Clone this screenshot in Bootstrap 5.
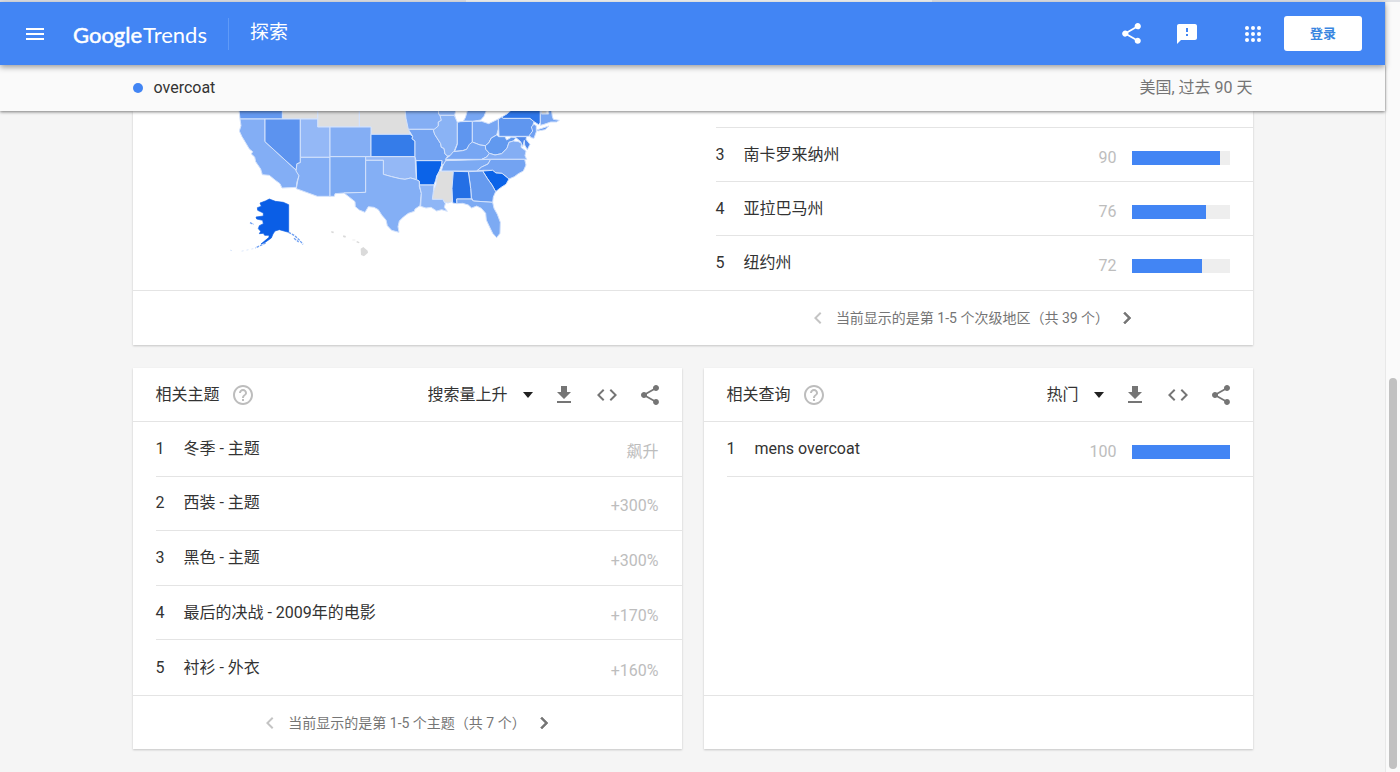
<!DOCTYPE html>
<html lang="zh-CN">
<head>
<meta charset="utf-8">
<meta name="viewport" content="width=device-width, initial-scale=1">
<title>overcoat - 探索 - Google Trends</title>
<link rel="stylesheet" href="https://cdn.jsdelivr.net/npm/bootstrap@5.3.0/dist/css/bootstrap.min.css">
<style>
  body { font-family: Roboto, "Noto Sans CJK SC", sans-serif; font-size: 16px; line-height: 24px; color: #333; background: #f5f5f5; }
  .tab-strip { height: 2px; background: #dfe1e6; }
  .tab-strip .current { width: 33.3%; margin-left: 33.3%; background: #f1f3f4; }
  .page-width { width: 100%; max-width: 1120px; margin: 0 auto; }
  .topbar { height: 63px; background: #4285f4; color: #fff; box-shadow: 0 2px 6px rgba(0,0,0,.4); padding: 0 23px 0 15px; z-index: 3; }
  .icon-btn { border: 0; background: none; padding: 0; width: 40px; height: 40px; color: inherit; display: inline-flex; align-items: center; justify-content: center; }
  .icon-btn svg, .pager svg { fill: currentColor; display: block; }
  .brand { font-family: Lato, sans-serif; font-size: 22px; line-height: 30px; color: #fff; text-decoration: none; margin: 2px 0 0 18px; }
  .brand-strong { -webkit-text-stroke: .5px #fff; margin-right: 1px; }
  .rule-v { width: 1px; height: 32px; background: #5f9af8; margin: 0 21px; }
  .section-name { font-size: 19px; font-weight: 400; margin: 0; }
  .feedback { margin: 0 26px 0 16px; }
  .login { width: 78px; height: 35px; border: 0; border-radius: 3px; background: #fff; color: #3a86e0; font-size: 13px; font-weight: 700; margin-left: 11px; padding: 0; }
  .termbar { height: 46px; background: #fafafa; box-shadow: 0 1px 3px rgba(0,0,0,.5); z-index: 2; }
  .dot { width: 10px; height: 10px; border-radius: 50%; background: #4285f4; margin-right: 11px; }
  .muted { color: #757575; }
  .panel { background: #fff; box-shadow: 0 1px 2px rgba(0,0,0,.2); }
  .panel-head { height: 54px; border-bottom: 1px solid #e4e4e4; padding: 0 10px 0 23px; }
  .panel-head h2 { font-size: 16px; line-height: 24px; font-weight: 400; margin: 0; }
  .panel-head .icon-btn { width: 43px; color: #757575; }
  .panel-head .help { width: 20px; margin-left: 13px; color: #bdbdbd; }
  .sorter { appearance: none; border: 0; color: #333; font-size: 16px; line-height: 24px; padding: 0 34px 0 0; background: url("data:image/svg+xml,%3Csvg xmlns='http://www.w3.org/2000/svg' width='10' height='6'%3E%3Cpath d='M0 0h10L5 6z' fill='%23212121'/%3E%3C/svg%3E") no-repeat right 10px center; }
  .rank-list { list-style: none; margin: 0 0 0 23px; padding: 0; display: grid; }
  .rank-list.five { height: 273px; grid-template-rows: repeat(5, 1fr); }
  .rank-list.three { height: 162px; grid-template-rows: repeat(3, 1fr); }
  .rank-list li { display: flex; align-items: center; padding-right: 23px; border-bottom: 1px solid #e4e4e4; }
  .rank-list li:nth-child(3):last-child, .rank-list li:nth-child(5) { border-bottom: 0; }
  .rank-no { width: 28px; }
  .metric { margin-left: auto; display: flex; align-items: center; padding-top: 6px; color: #bdbdbd; }
  .meter { width: 98px; height: 14px; background: #eee; margin-left: 15px; }
  .meter-fill { height: 100%; background: #4285f4; }
  .row-end { height: 17px; margin-left: 23px; border-bottom: 1px solid #e4e4e4; }
  .panel-foot { height: 55px; border-top: 1px solid #e4e4e4; }
  .panel-pair .panel-foot { height: 54px; }
  .pager { font-size: 14px; color: #757575; height: 100%; display: flex; align-items: center; justify-content: center; }
  .pager .icon-btn { width: 24px; height: 24px; margin: 0 6px; }
  .pager .icon-btn:disabled { color: #c4c4c4; }
  .map-svg { display: block; margin-left: 87px; width: 350px; height: 159px; }
  .map-svg .land { stroke: #d3e2fc; stroke-width: 3; stroke-linejoin: round; }
  .panel-pair { gap: 22px; margin-top: 23px; }
  .scroll-track { width: 15px; background: #fafafa; border-left: 1px solid #e8e8e8; display: flex; flex-direction: column; justify-content: flex-end; padding: 0 3px 3px; }
  .scroll-thumb { height: 51%; border-radius: 4px; background: #c1c1c1; }
</style>
</head>
<body>
<svg class="d-none" aria-hidden="true">
  <symbol id="i-share" viewBox="0 0 24 24"><path d="M18 16.08c-.76 0-1.44.3-1.96.77L8.91 12.7c.05-.23.09-.46.09-.7s-.04-.47-.09-.7l7.05-4.11c.54.5 1.25.81 2.04.81 1.66 0 3-1.34 3-3s-1.34-3-3-3-3 1.34-3 3c0 .24.04.47.09.7L8.04 9.81C7.5 9.31 6.79 9 6 9c-1.66 0-3 1.34-3 3s1.34 3 3 3c.79 0 1.5-.31 2.04-.81l7.12 4.16c-.05.21-.08.43-.08.65 0 1.61 1.31 2.92 2.92 2.92s2.92-1.31 2.92-2.92-1.31-2.92-2.92-2.92z"/></symbol>
  <symbol id="i-download" viewBox="0 0 24 24"><path d="M19 9h-4V3H9v6H5l7 7 7-7zM5 18v2h14v-2H5z"/></symbol>
  <symbol id="i-code" viewBox="0 0 24 24"><path d="M9.4 16.6L4.8 12l4.6-4.6L8 6l-6 6 6 6 1.4-1.4zm5.2 0l4.6-4.6-4.6-4.6L16 6l6 6-6 6-1.4-1.4z"/></symbol>
  <symbol id="i-help" viewBox="0 0 24 24"><path d="M11 18h2v-2h-2v2zm1-16C6.48 2 2 6.48 2 12s4.48 10 10 10 10-4.48 10-10S17.52 2 12 2zm0 18c-4.41 0-8-3.59-8-8s3.59-8 8-8 8 3.59 8 8-3.59 8-8 8zm0-14c-2.21 0-4 1.79-4 4h2c0-1.1.9-2 2-2s2 .9 2 2c0 2-3 1.75-3 5h2c0-2.25 3-2.5 3-5 0-2.21-1.79-4-4-4z"/></symbol>
  <symbol id="i-prev" viewBox="0 0 24 24"><path d="M15.41 7.41L14 6l-6 6 6 6 1.41-1.41L10.83 12z"/></symbol>
  <symbol id="i-next" viewBox="0 0 24 24"><path stroke="currentColor" stroke-width=".6" d="M10 6L8.59 7.41 13.17 12l-4.58 4.59L10 18l6-6z"/></symbol>
</svg>

<div class="min-vh-100 d-flex flex-column">
  <div class="tab-strip d-flex"><div class="current"></div></div>
  <div class="d-flex flex-grow-1">
    <div class="flex-grow-1">
      <header class="topbar position-relative d-flex align-items-center">
        <button class="icon-btn" type="button" aria-label="菜单"><svg width="24" height="24" viewBox="0 0 24 24"><path d="M3 18h18v-2H3v2zm0-5h18v-2H3v2zm0-7v2h18V6H3z"/></svg></button>
        <a class="brand" href="#"><span class="brand-strong">Google</span><span>Trends</span></a>
        <div class="rule-v"></div>
        <h1 class="section-name">探索</h1>
        <div class="ms-auto d-flex align-items-center">
          <button class="icon-btn" type="button" aria-label="分享"><svg width="25" height="25"><use href="#i-share"/></svg></button>
          <button class="icon-btn feedback" type="button" aria-label="反馈"><svg width="24" height="24" viewBox="0 0 24 24"><path d="M20 2H4c-1.100 0-1.990.9-1.990 2L2 22l4-4h14c1.100 0 2-.9 2-2V4c0-1.100-.9-2-2-2zm-7 12h-2v-2h2v2zm0-4h-2V6h2v4z"/></svg></button>
          <button class="icon-btn" type="button" aria-label="Google 应用"><svg width="24" height="24" viewBox="0 0 24 24"><g><circle cx="6" cy="6" r="2"/><circle cx="12" cy="6" r="2"/><circle cx="18" cy="6" r="2"/><circle cx="6" cy="12" r="2"/><circle cx="12" cy="12" r="2"/><circle cx="18" cy="12" r="2"/><circle cx="6" cy="18" r="2"/><circle cx="12" cy="18" r="2"/><circle cx="18" cy="18" r="2"/></g></svg></button>
          <button class="login" type="button">登录</button>
        </div>
      </header>

      <div class="termbar position-relative d-flex">
        <div class="page-width d-flex align-items-center">
          <span class="dot"></span><span>overcoat</span>
          <span class="ms-auto muted">美国, 过去 90 天</span>
        </div>
      </div>

      <main class="page-width pb-3">
        <section class="panel">
          <div class="row g-0">
            <div class="col-6">
              <svg class="map-svg" viewBox="0 18 1050 477" role="img" aria-label="按区域显示的搜索热度">
                <g class="land">
                  <g fill="#dedede">
                    <path d="M187 14H293V42H187zM293 14H418V66H293zM418 14H555L558 40 566 62 570 88H453V66H418z"/>
                    <path d="M658 198H700L697 250 696 290 684 294 675 292 668 283H637L640 260 648 240 650 225z"/>
                    <path d="M964 14h14v12l-14 2z"/>
                  </g>
                  <path fill="#6499f0" d="M57 14H187V42H60z"/>
                  <path fill="#83aef5" d="M60 42H135V110L228 195 237 212 231 230 229 247 186 249 180 236 165 225 148 211 127 209 122 192 107 170 104 156 94 147 98 140 88 132 75 110 66 95 58 78 63 62z"/>
                  <path fill="#5c93ef" d="M135 42H241V173L231 176 228 195 135 110z"/>
                  <path fill="#94b8f6" d="M241 42H293V66H330V157H241z"/>
                  <path fill="#84aef4" d="M330 66H453V155H330z"/>
                  <path fill="#83aef5" d="M241 157H330V274H292L229 251 233 228 237 212 228 198 231 176 241 173z"/>
                  <path fill="#7caaf3" d="M330 155H437V262L372 264 345 266 343 274H330z"/>
                  <path fill="#357ce9" d="M453 88H570L578 94 576 101 585 108V155H453z"/>
                  <path fill="#94b8f6" d="M437 155H585L589 224 572 219 555 223 540 221 515 215 490 208V166H437z"/>
                  <path fill="#84aff5" d="M437 166H490V208L515 215 540 221 555 223 572 219 589 224 598 228V245L604 265 600 302 585 312 583 319 565 325 550 336 538 348 534 365 537 382 515 376 502 362 498 345 485 330 475 314 462 307 445 305 435 322 418 315 406 305 405 290 390 278 372 264 437 262z"/>
                  <path fill="#84aef4" d="M555 14H655L656 27 664 36V46L655 51V63L644 73H565L558 40z"/>
                  <path fill="#73a3f2" d="M565 73H640L644 88 653 102 662 116 664 127 672 130 675 147 683 153 678 162 677 176 665 180 666 167H588L585 155V108L576 101 578 94z"/>
                  <path fill="#8ab3f5" d="M655 14H708L704 30 706 45 703 31H660L656 27z"/>
                  <path fill="#8ab3f5" d="M660 31H703L712 52V115L706 130 700 145 690 152 683 153 675 147 672 130 664 127 662 116 653 102 644 88 640 75 655 63V51L664 46z"/>
                  <path fill="#77a6f3" d="M743 14H800L792 34 782 45 758 49 730 48 736 38z"/>
                  <path fill="#5f96ef" d="M712 52L722 50 757 49V115L748 122 740 133 728 137 704 139 712 118z"/>
                  <path fill="#77a6f3" d="M757 49H785L806 56 835 42V72L830 90 814 99 806 114 796 122 780 120 757 111z"/>
                  <path fill="#5f96ef" d="M835 42L845 36 850 40H930L942 50 937 65 949 76 938 91 925 94H837z"/>
                  <path fill="#2e76e8" d="M845 36L862 26 875 14H961V52L956 59 942 50 930 40H850z"/>
                  <path fill="#77a6f3" d="M961 14H964V27H986V14H994L997 34 1000 43 1018 46 1010 51 992 51 972 58 961 61z"/>
                  <path fill="#6fa0f2" d="M942 58L949 62V80L942 100 933 98 928 91 938 78 934 66z"/>
                  <path fill="#5f96ef" d="M950 75L975 67 987 63 975 74 953 78z"/>
                  <path fill="#6199ef" d="M796 122L806 114 814 99 830 90 836 95H855L860 105 875 96 888 98 880 108 867 112 861 130 845 146 825 150 808 145 797 133z"/>
                  <path fill="#77a6f3" d="M676 162L690 152 700 140 728 137 740 133 748 118 757 111 780 120 796 122 797 133 808 145 800 156 785 163H676z"/>
                  <path fill="#84aef4" d="M785 163L800 156 808 145 825 150 845 146 861 130 867 112 880 108 895 110 905 115 903 127 918 138 915 152 920 163z"/>
                  <path fill="#5089eb" d="M870 95H920L918 103 930 118 922 134 914 120 913 106 908 125 902 110 888 98z"/>
                  <path fill="#7caaf3" d="M664 198L668 183 677 167 812 163 804 177 785 186 770 198z"/>
                  <path fill="#73a3f2" d="M770 198L785 186 804 177 812 163H914L918 180 910 198 895 206 883 215 867 222 846 205 828 204 818 196 790 196z"/>
                  <path fill="#0b63e8" d="M788 198L818 196 828 204 846 205 867 222 858 238 842 248 827 260 816 240 803 222z"/>
                  <path fill="#659aef" d="M745 200L788 198 803 222 816 240 827 260 820 276 818 292 760 288 754 278 752 250z"/>
                  <path fill="#246fe5" d="M700 199L745 200 752 250 754 282H710L711 296 698 294 696 250z"/>
                  <path fill="#0b63e8" d="M588 167H666L664 182 658 198 650 213 647 226 642 240H599L598 228 590 224z"/>
                  <path fill="#8fb6f6" d="M598 240H642L640 260 637 283H668L676 296 673 307 682 319 665 314 650 318 633 307 618 309 602 304 604 265z"/>
                  <path fill="#7caaf3" d="M710 282H754L760 288 818 292 822 310 832 328 841 352 840 385 830 398 818 385 806 360 799 345 797 325 784 310 770 303 755 309 745 300 728 295 711 296z"/>
                </g>
                <path fill="#0a5ee6" stroke="#0a5ee6" stroke-width="2" d="M120 294L136 288 148 282 166 289 190 292 206 299V382L192 378 178 374 165 378 159 387 154 399 134 413 123 417 147 397 147 391 134 391 130 385 118 386 122 379 115 371 118 362 130 356 128 346 110 342 108 336 130 333 130 324 113 316 112 308 124 304z"/>
                <path fill="none" stroke="#6fa0f2" stroke-width="4" stroke-dasharray="8 3" d="M206 382L224 392 237 404 249 418M137 414L106 429M90 353L101 358M222 400L236 411"/>
                <path fill="none" stroke="#dce8fc" stroke-width="3" stroke-dasharray="6 9" d="M100 431L58 440M36 437L22 433"/>
                <path fill="#dadada" d="M422 431L430 426 443 437 444 443 432 454 423 450zM411 408l8 4-3 3-7-3zM370 391l8 2-2 5-7-2zM334 378l8 2-2 5-6-2zM397 404h9v2h-9z"/>
              </svg>
            </div>
            <div class="col-6">
              <div class="row-end"></div>
              <ol class="rank-list three">
                <li><span class="rank-no">3</span><span>南卡罗来纳州</span><span class="metric">90<span class="meter"><span class="meter-fill d-block" style="width:90%"></span></span></span></li>
                <li><span class="rank-no">4</span><span>亚拉巴马州</span><span class="metric">76<span class="meter"><span class="meter-fill d-block" style="width:76%"></span></span></span></li>
                <li><span class="rank-no">5</span><span>纽约州</span><span class="metric">72<span class="meter"><span class="meter-fill d-block" style="width:72%"></span></span></span></li>
              </ol>
            </div>
          </div>
          <div class="panel-foot row g-0">
            <div class="col-6 offset-6 pager">
              <button class="icon-btn" type="button" aria-label="上一页" disabled><svg width="24" height="24"><use href="#i-prev"/></svg></button>
              <span>当前显示的是第 1-5 个次级地区（共 39 个）</span>
              <button class="icon-btn" type="button" aria-label="下一页"><svg width="24" height="24"><use href="#i-next"/></svg></button>
            </div>
          </div>
        </section>

        <div class="panel-pair d-flex">
          <section class="panel flex-fill w-50">
            <div class="panel-head d-flex align-items-center">
              <h2>相关主题</h2>
              <button class="icon-btn help" type="button" aria-label="帮助"><svg width="24" height="24" class="flex-shrink-0"><use href="#i-help"/></svg></button>
              <select class="sorter ms-auto" aria-label="主题排序"><option>搜索量上升</option></select>
              <button class="icon-btn" type="button" aria-label="下载"><svg width="24" height="24"><use href="#i-download"/></svg></button>
              <button class="icon-btn" type="button" aria-label="嵌入"><svg width="24" height="24"><use href="#i-code"/></svg></button>
              <button class="icon-btn" type="button" aria-label="分享"><svg width="24" height="24"><use href="#i-share"/></svg></button>
            </div>
            <ol class="rank-list five">
              <li><span class="rank-no">1</span><span>冬季 - 主题</span><span class="metric">飙升</span></li>
              <li><span class="rank-no">2</span><span>西装 - 主题</span><span class="metric">+300%</span></li>
              <li><span class="rank-no">3</span><span>黑色 - 主题</span><span class="metric">+300%</span></li>
              <li><span class="rank-no">4</span><span>最后的决战 - 2009年的电影</span><span class="metric">+170%</span></li>
              <li><span class="rank-no">5</span><span>衬衫 - 外衣</span><span class="metric">+160%</span></li>
            </ol>
            <div class="panel-foot">
              <div class="pager">
                <button class="icon-btn" type="button" aria-label="上一页" disabled><svg width="24" height="24"><use href="#i-prev"/></svg></button>
                <span>当前显示的是第 1-5 个主题（共 7 个）</span>
                <button class="icon-btn" type="button" aria-label="下一页"><svg width="24" height="24"><use href="#i-next"/></svg></button>
              </div>
            </div>
          </section>

          <section class="panel flex-fill w-50">
            <div class="panel-head d-flex align-items-center">
              <h2>相关查询</h2>
              <button class="icon-btn help" type="button" aria-label="帮助"><svg width="24" height="24" class="flex-shrink-0"><use href="#i-help"/></svg></button>
              <select class="sorter ms-auto" aria-label="查询排序"><option>热门</option></select>
              <button class="icon-btn" type="button" aria-label="下载"><svg width="24" height="24"><use href="#i-download"/></svg></button>
              <button class="icon-btn" type="button" aria-label="嵌入"><svg width="24" height="24"><use href="#i-code"/></svg></button>
              <button class="icon-btn" type="button" aria-label="分享"><svg width="24" height="24"><use href="#i-share"/></svg></button>
            </div>
            <ol class="rank-list five">
              <li><span class="rank-no">1</span><span>mens overcoat</span><span class="metric">100<span class="meter"><span class="meter-fill d-block" style="width:100%"></span></span></span></li>
            </ol>
            <div class="panel-foot"></div>
          </section>
        </div>
      </main>
    </div>
    <div class="scroll-track"><div class="scroll-thumb"></div></div>
  </div>
</div>
<script src="https://cdn.jsdelivr.net/npm/bootstrap@5.3.0/dist/js/bootstrap.bundle.min.js"></script>
</body>
</html>
